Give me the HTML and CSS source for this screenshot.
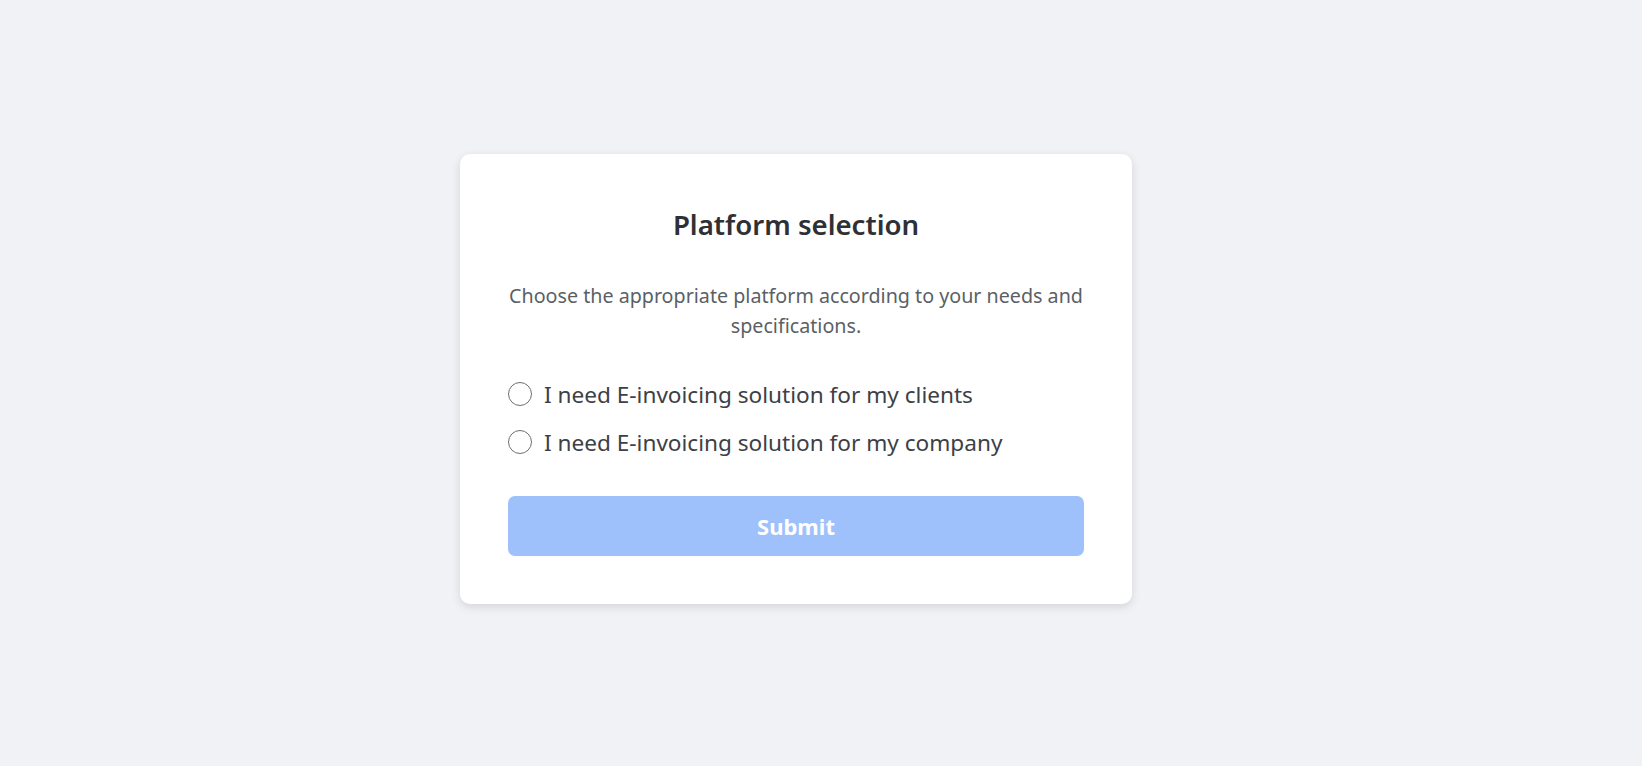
FILE: index.html
```html
<!DOCTYPE html>
<html>
<head>
    <title>Platform selection</title>
    <link rel="stylesheet" href="styles.css">
</head>
<body>
    <div class="page">
        <form class="card" id="platform-form">
            <h2 class="card-title">Platform selection</h2>
            <p class="card-text">Choose the appropriate platform according to your needs and specifications.</p>
            <div class="options">
                <label class="option">
                    <input type="radio" name="platform" value="clients">
                    <span>I need E-invoicing solution for my clients</span>
                </label>
                <label class="option">
                    <input type="radio" name="platform" value="company">
                    <span>I need E-invoicing solution for my company</span>
                </label>
            </div>
            <button type="button" class="submit-btn" disabled>Submit</button>
        </form>
    </div>
</body>
</html>
```

FILE: styles.css
```css
body {
    font-family: "Noto Sans", sans-serif;
    background-color: #f0f2f5;
    margin: 0;
    padding: 0;
}

.page {
    min-height: 766px;
    display: flex;
    justify-content: center;
    align-items: flex-start;
    padding-top: 154px;
    padding-right: 50px;
    box-sizing: border-box;
}

.card {
    width: 672px;
    box-sizing: border-box;
    background-color: #fff;
    border-radius: 10px;
    padding: 48px;
    box-shadow: 0px 3px 10px rgba(0, 0, 0, 0.12);
    display: flex;
    flex-direction: column;
}

.card-title {
    margin: 0;
    font-size: 27.6px;
    line-height: 44px;
    font-weight: 600;
    color: #2e3035;
    text-align: center;
}

.card-text {
    margin: 35px 0 0;
    font-size: 19.7px;
    line-height: 30px;
    color: #5b5f66;
    text-align: center;
}

.options {
    margin-top: 33px;
    display: flex;
    flex-direction: column;
    gap: 8px;
}

.option {
    display: flex;
    align-items: center;
    gap: 12px;
    height: 40px;
    font-size: 22.6px;
    color: #3d4046;
    cursor: pointer;
}

.option input[type="radio"] {
    appearance: none;
    margin: 0;
    width: 24px;
    height: 24px;
    border: 1px solid #6b6f75;
    border-radius: 50%;
    background-color: #fff;
    flex-shrink: 0;
}

.submit-btn {
    margin-top: 34px;
    height: 60px;
    border: none;
    border-radius: 7px;
    background-color: #9fc1fb;
    color: #fff;
    font-family: "Noto Sans", sans-serif;
    font-size: 22px;
    font-weight: 700;
    cursor: pointer;
}
```
